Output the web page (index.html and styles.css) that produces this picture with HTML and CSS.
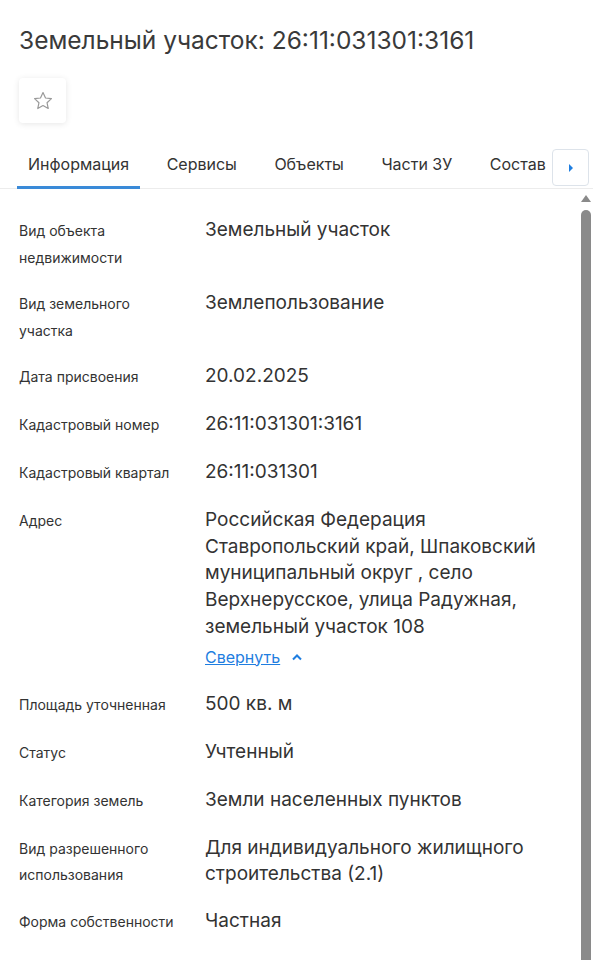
FILE: index.html
```html
<!DOCTYPE html>
<html lang="ru">
<head>
  <meta charset="UTF-8">
  <meta name="viewport" content="width=device-width, initial-scale=1.0">
  <title>Земельный участок</title>
  <link rel="stylesheet" href="styles.css">
</head>
<body>
  <div class="card">
    <h1 class="title">Земельный участок: 26:11:031301:3161</h1>
    <button class="fav" title="В избранное">
      <svg width="22" height="22" viewBox="0 0 24 24"><path d="M12 2.8l2.75 5.9 6.45.75-4.8 4.4 1.3 6.35L12 16.95 6.3 20.2l1.3-6.35-4.8-4.4 6.45-.75z" fill="none" stroke="#9a9a9a" stroke-width="1.3" stroke-linejoin="round"/></svg>
    </button>

    <div class="tabs">
      <a class="tab active">Информация</a>
      <a class="tab">Сервисы</a>
      <a class="tab">Объекты</a>
      <a class="tab">Части ЗУ</a>
      <a class="tab">Состав</a>
      <button class="tabs-next">
        <svg width="8" height="10" viewBox="0 0 8 10"><path d="M2 1l4 4-4 4z" fill="#1f7ee0"/></svg>
      </button>
    </div>

    <div class="body">
      <dl class="info">
        <div class="row"><dt>Вид объекта<br>недвижимости</dt><dd>Земельный участок</dd></div>
        <div class="row"><dt>Вид земельного<br>участка</dt><dd>Землепользование</dd></div>
        <div class="row"><dt>Дата присвоения</dt><dd>20.02.2025</dd></div>
        <div class="row"><dt>Кадастровый номер</dt><dd>26:11:031301:3161</dd></div>
        <div class="row"><dt>Кадастровый квартал</dt><dd>26:11:031301</dd></div>
        <div class="row">
          <dt>Адрес</dt>
          <dd>Российская Федерация<br>Ставропольский край, Шпаковский<br>муниципальный округ , село<br>Верхнерусское, улица Радужная,<br>земельный участок 108
            <div class="toggle-line">
              <a class="toggle">Свернуть</a>
              <svg class="chev" width="12" height="8" viewBox="0 0 12 8"><path d="M2 6.5L6 2.5l4 4" fill="none" stroke="#1f7ee0" stroke-width="2"/></svg>
            </div>
          </dd>
        </div>
        <div class="row"><dt>Площадь уточненная</dt><dd>500 кв. м</dd></div>
        <div class="row"><dt>Статус</dt><dd>Учтенный</dd></div>
        <div class="row"><dt>Категория земель</dt><dd>Земли населенных пунктов</dd></div>
        <div class="row"><dt>Вид разрешенного<br>использования</dt><dd>Для индивидуального жилищного<br>строительства (2.1)</dd></div>
        <div class="row"><dt>Форма собственности</dt><dd>Частная</dd></div>
      </dl>
      <div class="scrollbar">
        <span class="scroll-up"></span>
        <span class="scroll-thumb"></span>
      </div>
    </div>
  </div>
</body>
</html>
```

FILE: styles.css
```css
body {
  margin: 0;
  background: #fff;
  font-family: Inter, "Noto Sans", sans-serif;
  color: #333;
  overflow: hidden;
}
.card {
  height: 960px;
  overflow: hidden;
}
.title {
  margin: 0;
  padding: 25px 0 0 19px;
  font-size: 24.5px;
  line-height: 31px;
  font-weight: 400;
  color: #3a3a3a;
}
.fav {
  display: flex;
  align-items: center;
  justify-content: center;
  width: 47px;
  height: 45px;
  margin: 22px 0 0 19px;
  padding: 0;
  border: none;
  border-radius: 4px;
  background: #fff;
  box-shadow: 0 1px 6px rgba(0, 0, 0, 0.1);
}
.tabs {
  position: relative;
  display: flex;
  gap: 15.5px;
  margin-top: 22px;
  padding-left: 17px;
  border-bottom: 1px solid #ececec;
}
.tab {
  padding: 9px 11px 12px;
  font-size: 16px;
  line-height: 20px;
  color: #333;
  white-space: nowrap;
  border-bottom: 3px solid transparent;
  margin-bottom: -1px;
}
.tab.active {
  border-bottom-color: #3a8ad8;
}
.tabs-next {
  position: absolute;
  right: 4px;
  top: 4px;
  width: 37px;
  height: 37px;
  display: flex;
  align-items: center;
  justify-content: center;
  padding: 0;
  border: 1px solid #dde3ea;
  border-radius: 4px;
  background: #fff;
}
.body {
  display: flex;
}
.info {
  flex: 1;
  margin: 0;
  padding: 28px 0 0 19px;
}
.row {
  display: flex;
  min-height: 29px;
  margin-bottom: 19px;
}
.row dt {
  width: 186px;
  flex: none;
  font-size: 14px;
  line-height: 26.5px;
  padding-top: 1px;
  color: #333;
}
.row dd {
  margin: 0;
  font-size: 19px;
  line-height: 26.7px;
  color: #333;
}
.toggle-line {
  display: flex;
  align-items: center;
  height: 29px;
  margin-top: 2px;
}
.toggle {
  font-size: 16px;
  color: #1f7ee0;
  text-decoration: underline;
}
.chev {
  margin-left: 11px;
}
.scrollbar {
  width: 13px;
  margin-right: 1px;
  display: flex;
  flex-direction: column;
  align-items: center;
  padding-top: 6px;
}
.scroll-up {
  width: 0;
  height: 0;
  border-left: 5px solid transparent;
  border-right: 5px solid transparent;
  border-bottom: 7px solid #8a8a8a;
}
.scroll-thumb {
  width: 10px;
  height: 800px;
  margin-top: 8px;
  border-radius: 5px 5px 0 0;
  background: #8a8a8a;
}
```
